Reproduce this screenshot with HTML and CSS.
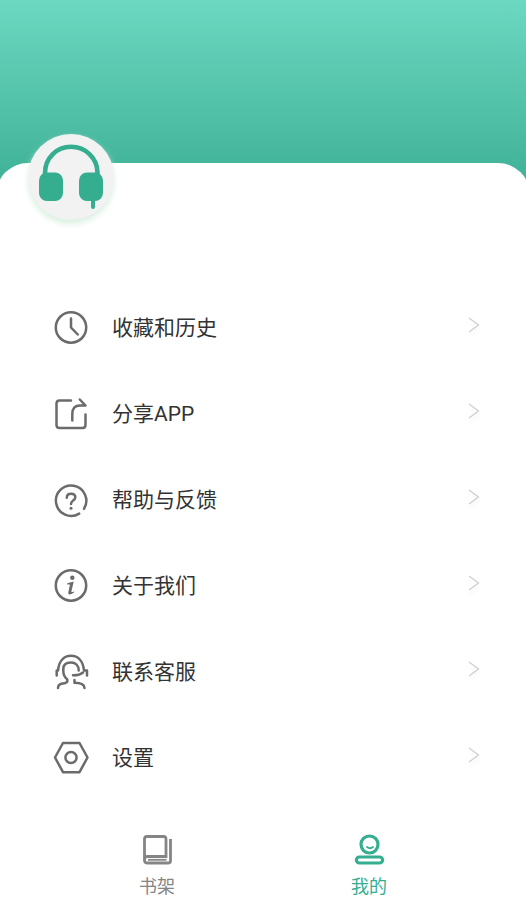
FILE: index.html
```html
<!DOCTYPE html>
<html lang="zh-CN">
<head>
<meta charset="utf-8">
<meta name="viewport" content="width=device-width, initial-scale=1">
<title>我的</title>
<link rel="stylesheet" href="styles.css">
</head>
<body>
<div class="page">
  <header class="hero"></header>
  <main class="sheet">
    <button class="avatar" type="button" aria-label="头像">
      <svg viewBox="0 0 86 86" aria-hidden="true">
        <path d="M17 41V39C17 24 28.500 12.800 43 12.800S69.500 24 69.500 39V41" fill="none" stroke="currentColor" stroke-width="4.600"/>
        <rect x="11" y="38.500" width="24" height="28.500" rx="8" fill="currentColor"/>
        <rect x="51" y="38.500" width="24" height="28.500" rx="8" fill="currentColor"/>
        <path d="M65 64V73" stroke="currentColor" stroke-width="4" stroke-linecap="round"/>
      </svg>
    </button>
    <ul class="menu">
      <li><a class="row" href="#history">
        <svg class="icon" viewBox="0 0 36 36" aria-hidden="true"><circle cx="18" cy="17.500" r="15.200"/><path d="M18 8.500V17.500L24.800 24.500"/></svg>
        <span class="label">收藏和历史</span>
        <svg class="arrow" viewBox="0 0 12 16" aria-hidden="true"><path d="M1 1L10.500 8L1 15"/></svg>
      </a></li>
      <li><a class="row" href="#share">
        <svg class="icon" viewBox="0 0 36 36" aria-hidden="true"><path d="M18 4.500H6.500Q3.500 4.500 3.500 7.500V29Q3.500 32 6.500 32H29.500Q32.500 32 32.500 29V18.500M19.300 24.500V18Q19.300 9.500 27 9.500H32.500L26.800 3.500"/></svg>
        <span class="label">分享APP</span>
        <svg class="arrow" viewBox="0 0 12 16" aria-hidden="true"><path d="M1 1L10.500 8L1 15"/></svg>
      </a></li>
      <li><a class="row" href="#help">
        <svg class="icon" viewBox="0 0 36 36" aria-hidden="true"><path d="M26.200 31.600A15.200 15.200 0 1 1 31 26.800M13.800 15.800Q13.800 11.700 18 11.700Q22.300 11.700 22.300 15.300Q22.300 17.300 19.900 18.700Q18 19.900 18 22"/><circle class="solid" cx="18" cy="26.300" r="1.500"/></svg>
        <span class="label">帮助与反馈</span>
        <svg class="arrow" viewBox="0 0 12 16" aria-hidden="true"><path d="M1 1L10.500 8L1 15"/></svg>
      </a></li>
      <li><a class="row" href="#about">
        <svg class="icon" viewBox="0 0 36 36" aria-hidden="true"><circle cx="18" cy="17.500" r="15.200"/><circle class="solid" cx="19.300" cy="9.800" r="2.200"/><path class="solid" d="M14.300 15.300L20.700 13.600L18.400 23.500Q18.200 24.800 21.300 23.200L21 24.600Q18.800 26.600 16.500 26.400Q14.800 26.200 15.300 24.200L17 16.500L14.200 16.600Z"/></svg>
        <span class="label">关于我们</span>
        <svg class="arrow" viewBox="0 0 12 16" aria-hidden="true"><path d="M1 1L10.500 8L1 15"/></svg>
      </a></li>
      <li><a class="row" href="#service">
        <svg class="icon" viewBox="0 0 36 36" aria-hidden="true"><path d="M3.700 21.500V16.500H5C6 7 11 1.800 18 1.800S30 7 31 16.500H34V21.500M14.300 27.500V25.500Q10.300 22.200 10.300 17V15C10.300 10.500 13.500 8.500 18 8.500S25.700 11.500 25.700 16.500M20 21.300Q26.500 21.500 30 18.500M14.300 27Q14.300 29 10 29.500Q5 30 5 34M21.500 26V28.700Q31.500 28.700 31.500 34"/></svg>
        <span class="label">联系客服</span>
        <svg class="arrow" viewBox="0 0 12 16" aria-hidden="true"><path d="M1 1L10.500 8L1 15"/></svg>
      </a></li>
      <li><a class="row" href="#settings">
        <svg class="icon" viewBox="0 0 36 36" aria-hidden="true"><path d="M10 3H26.500L34.500 17.500L26.500 32.200H10L2 17.500Z"/><circle cx="18" cy="17.500" r="5.600"/></svg>
        <span class="label">设置</span>
        <svg class="arrow" viewBox="0 0 12 16" aria-hidden="true"><path d="M1 1L10.500 8L1 15"/></svg>
      </a></li>
    </ul>
  </main>
  <nav class="tabs">
    <a class="tab" href="#shelf">
      <svg viewBox="0 0 34 34" aria-hidden="true"><path d="M4.500 28V6Q4.500 3.500 7 3.500H23.500Q26 3.500 26 6V23.500H7Q4.500 23.500 4.500 27Q4.500 30 7 30H28Q30.500 30 30.500 28V6" fill="none" stroke="currentColor" stroke-width="2.800"/><path d="M8 26.800H26.500" stroke="currentColor" stroke-width="1.800"/></svg>
      <span>书架</span>
    </a>
    <a class="tab active" href="#mine" aria-current="page">
      <svg viewBox="0 0 34 34" aria-hidden="true"><g fill="none" stroke="currentColor" stroke-width="3.200" stroke-linecap="round"><circle cx="17.500" cy="11.500" r="8.500"/><rect x="4.400" y="24" width="26.200" height="6" rx="3"/><path d="M15 14Q18 16.500 21 14" stroke-width="1.800"/></g></svg>
      <span>我的</span>
    </a>
  </nav>
</div>
</body>
</html>
```
FILE: styles.css
```css
* {
  box-sizing: border-box;
}

body {
  margin: 0;
  background: #fff;
  color: #333;
  font-family: Roboto, "Noto Sans CJK SC", sans-serif;
}

.page {
  display: flex;
  flex-direction: column;
  min-height: 100vh;
  overflow: hidden;
}

.hero {
  height: 200px;
  background: linear-gradient(#6cd8c1, #3bae92);
}

.sheet {
  position: relative;
  flex: 1;
  margin: -37px -4px 0;
  padding: 122px 4px 0;
  border-radius: 32px 32px 0 0;
  background: #fff;
}

.avatar {
  position: absolute;
  top: -29px;
  left: 32px;
  width: 86px;
  height: 86px;
  padding: 0;
  border: 0;
  border-radius: 50%;
  background: #f2f2f2;
  color: #34ae8f;
  box-shadow: 0 4px 6px #d9f0e0;
}

.avatar svg {
  display: block;
}

.menu {
  margin: 0;
  padding: 0;
  list-style: none;
}

.row {
  display: flex;
  align-items: center;
  height: 86px;
  padding: 0 46px 0 53px;
  color: inherit;
  text-decoration: none;
}

.icon {
  width: 36px;
  height: 36px;
  fill: none;
  stroke: #6b6b6b;
  stroke-width: 2.500;
  stroke-linecap: round;
  stroke-linejoin: round;
}

.icon .solid {
  fill: #6b6b6b;
  stroke: none;
}

.label {
  flex: 1;
  margin-left: 23px;
  font-size: 21px;
  line-height: 32px;
}

.arrow {
  width: 12px;
  height: 16px;
  margin-bottom: 6px;
  fill: none;
  stroke: #d3cdd0;
  stroke-width: 1.300;
  filter: drop-shadow(0 4px 2px #f3f1f2);
}

.tabs {
  display: flex;
  padding: 32px 51px 0;
}

.tab {
  display: flex;
  flex: 1;
  flex-direction: column;
  align-items: center;
  gap: 8px;
  color: #858585;
  font-size: 18px;
  line-height: 24px;
  text-decoration: none;
}

.tab svg {
  width: 34px;
  height: 34px;
}

.active {
  color: #34ae8f;
}
```
